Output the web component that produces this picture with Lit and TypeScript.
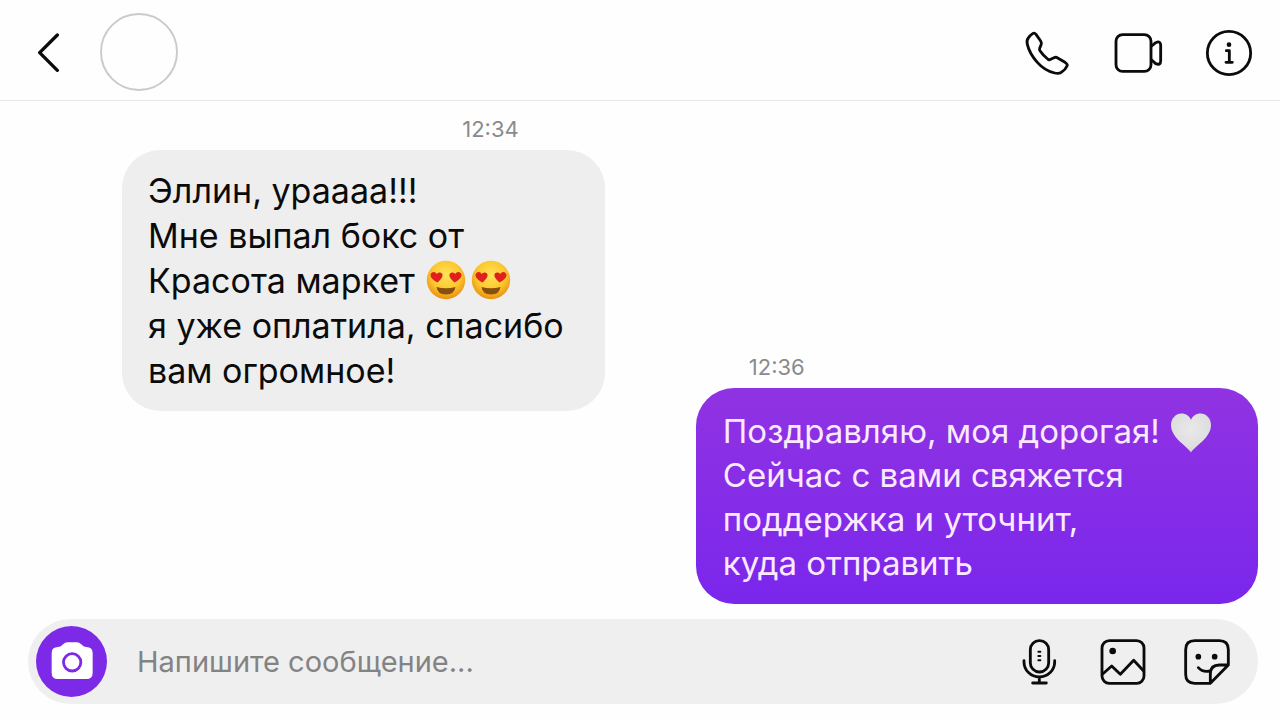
import { LitElement, html, css } from "lit";
import { customElement } from "lit/decorators.js";

const heartEyes = html`<svg class="emoji" viewBox="0 0 40 40" role="img" aria-label="Смайлик с глазами-сердечками">
  <defs>
    <radialGradient id="face" cx="50%" cy="38%" r="62%">
      <stop offset="0" stop-color="#ffe45a" />
      <stop offset="0.6" stop-color="#fdc830" />
      <stop offset="1" stop-color="#e9900f" />
    </radialGradient>
  </defs>
  <circle cx="20" cy="20" r="19.2" fill="url(#face)" />
  <path d="M10.500 27 Q20 29.500 29.500 27 Q28.500 34.500 20 34.500 Q11.500 34.500 10.500 27Z" fill="#87500c" />
  <path d="M11.500 22.500 C8 20.500 4 18 4.600 14.500 C5.200 11.300 9.300 11 10.800 14 C12.800 11.300 16.800 12.300 16.600 15.600 C16.400 18.500 13.500 20.500 11.500 22.500Z" fill="#e0201f" />
  <path d="M28.500 22.500 C32 20.500 36 18 35.400 14.500 C34.800 11.300 30.700 11 29.200 14 C27.200 11.300 23.200 12.300 23.400 15.600 C23.600 18.500 26.500 20.500 28.500 22.500Z" fill="#e0201f" />
</svg>`;

const whiteHeart = html`<svg class="emoji" viewBox="0 0 40 40" role="img" aria-label="Белое сердце">
  <defs>
    <radialGradient id="heart" cx="50%" cy="40%" r="60%">
      <stop offset="0" stop-color="#e9e9e9" />
      <stop offset="0.8" stop-color="#dedede" />
      <stop offset="1" stop-color="#cfcdd2" />
    </radialGradient>
  </defs>
  <path d="M20 39.500 C16 33 0 25 0 12 C0 5 5 0.500 10.500 0.500 C15 0.500 18.500 3 20 7 C21.500 3 25 0.500 29.500 0.500 C35 0.500 40 5 40 12 C40 25 24 33 20 39.500Z" fill="url(#heart)" />
</svg>`;

@customElement("app-root")
export class AppRoot extends LitElement {
  static styles = css`
    :host {
      display: flex;
      flex-direction: column;
      min-height: 100vh;
      box-sizing: border-box;
      padding-bottom: 16px;
      background: #fefefe;
      color: #0b0b0c;
      font-family: Inter, "Liberation Sans", sans-serif;
    }
    .header {
      display: flex;
      align-items: center;
      justify-content: space-between;
      padding: 13px 27px 9px 33px;
      border-bottom: 1px solid #e9e9e9;
    }
    .side {
      display: flex;
      align-items: center;
      gap: 27px;
    }
    .actions {
      display: flex;
      align-items: center;
      gap: 42px;
      padding-top: 2px;
    }
    button {
      display: block;
      flex: none;
      padding: 0;
      border: 0;
      background: none;
      color: inherit;
      cursor: pointer;
    }
    .icon {
      display: block;
      width: 48px;
      height: 48px;
      fill: none;
      stroke: currentColor;
      stroke-width: 8.5;
      stroke-linecap: round;
      stroke-linejoin: round;
    }
    .icon.video {
      width: 50px;
      height: 50px;
    }
    .icon.back {
      width: 40px;
      height: 40px;
      stroke-width: 10;
    }
    .solid {
      fill: currentColor;
      stroke: none;
    }
    .avatar {
      box-sizing: border-box;
      width: 78px;
      height: 78px;
      border: 2px solid #cbcbcb;
      border-radius: 50%;
    }
    .chat {
      flex: 1;
      display: flex;
      justify-content: space-between;
      padding: 14px 22px 15px 122px;
    }
    .message {
      display: flex;
      flex-direction: column;
      gap: 6px;
    }
    .message.outgoing {
      align-self: flex-end;
    }
    time {
      padding: 0 86px 0 53px;
      color: #8b8b8b;
      font-size: 22px;
      line-height: 29px;
    }
    .incoming time {
      align-self: flex-end;
    }
    .bubble {
      margin: 0;
      border-radius: 38px;
      font-size: 34px;
      white-space: nowrap;
    }
    .incoming .bubble {
      padding: 18px 41px 18px 26px;
      background: #eeeeee;
      line-height: 45px;
    }
    .outgoing .bubble {
      padding: 21px 45px 19px 27px;
      background: linear-gradient(#9033e2, #7a26ec);
      color: #fbeaff;
      font-size: 33px;
      line-height: 44px;
    }
    .emoji {
      width: 40px;
      height: 40px;
      margin: -4px 2px;
      vertical-align: -6px;
    }
    .incoming .emoji {
      margin: -4px 3px -4px 2px;
      vertical-align: -3px;
    }
    .composer {
      display: flex;
      align-items: center;
      gap: 30px;
      margin: 0 22px 0 28px;
      padding: 7px 27px 7px 8px;
      border-radius: 43px;
      background: #efeff0;
    }
    .camera {
      display: grid;
      place-items: center;
      width: 71px;
      height: 71px;
      border-radius: 50%;
      background: #7d2ae8;
      color: #ffffff;
    }
    .camera svg {
      width: 42px;
      height: 42px;
    }
    .field {
      flex: 1;
      min-width: 0;
      padding: 0;
      border: 0;
      outline: 0;
      background: none;
      color: inherit;
      font: 29px/40px Inter, "Liberation Sans", sans-serif;
    }
    .field::placeholder {
      color: #838383;
      opacity: 1;
    }
    .tools {
      display: flex;
      gap: 36px;
    }
  `;

  render() {
    return html`
      <header class="header">
        <div class="side">
          <button aria-label="Назад">
            <svg class="icon back" viewBox="99 97 120 120"><path d="M172 106 L119 159 L172 212" /></svg>
          </button>
          <div class="avatar"></div>
        </div>
        <div class="actions">
          <button aria-label="Позвонить">
            <svg class="icon" viewBox="68 87 144 144">
              <path d="M97 101q5-4 10 2l14 20q4 6 1 12l-4 10q-2 5 2 9q8 12 22 23q4 4 9 1l10-5q6-3 11 1l22 13q9 6 6 11q-5 12-17 19q-8 5-20 2q-30-7-52-32q-24-27-30-54q-3-12 3-19q5-8 13-13z" />
            </svg>
          </button>
          <button aria-label="Видеозвонок">
            <svg class="icon video" viewBox="339 84 150 150">
              <rect x="348" y="104" width="105" height="110" rx="20" />
              <path d="M455 138L467 128q15-7 15 8v46q0 15-15 9L455 180" />
            </svg>
          </button>
          <button aria-label="Информация">
            <svg class="icon" viewBox="614 87 144 144">
              <circle cx="686" cy="159" r="65" />
              <circle class="solid" cx="686" cy="134" r="7" />
              <path d="M678 152h9v35M677 187h19" />
            </svg>
          </button>
        </div>
      </header>

      <main class="chat">
        <article class="message incoming">
          <time>12:34</time>
          <p class="bubble">Эллин, ураааа!!!<br />Мне выпал бокс от<br />Красота маркет ${heartEyes}${heartEyes}<br />я уже оплатила, спасибо<br />вам огромное!</p>
        </article>
        <article class="message outgoing">
          <time>12:36</time>
          <p class="bubble">Поздравляю, моя дорогая! ${whiteHeart}<br />Сейчас с вами свяжется<br />поддержка и уточнит,<br />куда отправить</p>
        </article>
      </main>

      <form class="composer" @submit=${(e: Event) => e.preventDefault()}>
        <button class="camera" type="button" aria-label="Камера">
          <svg viewBox="151 91 126 126">
            <path fill="currentColor" d="M172 109q8 0 12-5l4-4q5-5 12-5h29q7 0 12 5l4 4q4 5 12 5q19 0 19 19v58q0 19-19 19h-85q-19 0-19-19v-58q0-19 19-19z" />
            <circle cx="214.500" cy="155" r="26" fill="none" stroke="#7d2ae8" stroke-width="8.500" />
          </svg>
        </button>
        <input class="field" type="text" aria-label="Сообщение" placeholder="Напишите сообщение..." />
        <div class="tools">
          <button type="button" aria-label="Голосовое сообщение">
            <svg class="icon" viewBox="46 82 144 144">
              <rect x="92" y="90" width="55" height="94" rx="27" />
              <path d="M73 150v4a46 45 0 0 0 92 0v-4M119 199v18M99 217h41" />
              <path stroke-width="6" d="M116 123h6M116 136h6M116 149h6" />
            </svg>
          </button>
          <button type="button" aria-label="Фото">
            <svg class="icon" viewBox="297 82 144 144">
              <rect x="306" y="90" width="126" height="128" rx="22" />
              <circle class="solid" cx="338" cy="121" r="10" />
              <path d="M308 190L335 166L361 191L401 149L431 181" />
            </svg>
          </button>
          <button type="button" aria-label="Стикеры">
            <svg class="icon" viewBox="548 82 144 144">
              <path d="M630 218h-47q-27 0-27-27v-74q0-27 27-27h74q27 0 27 27v46L630 218v-28q0-27 27-27h27" />
              <path d="M594 171q13 15 36 10" />
              <circle class="solid" cx="594" cy="138" r="8.500" />
              <circle class="solid" cx="643" cy="138" r="8.500" />
            </svg>
          </button>
        </div>
      </form>
    `;
  }
}
